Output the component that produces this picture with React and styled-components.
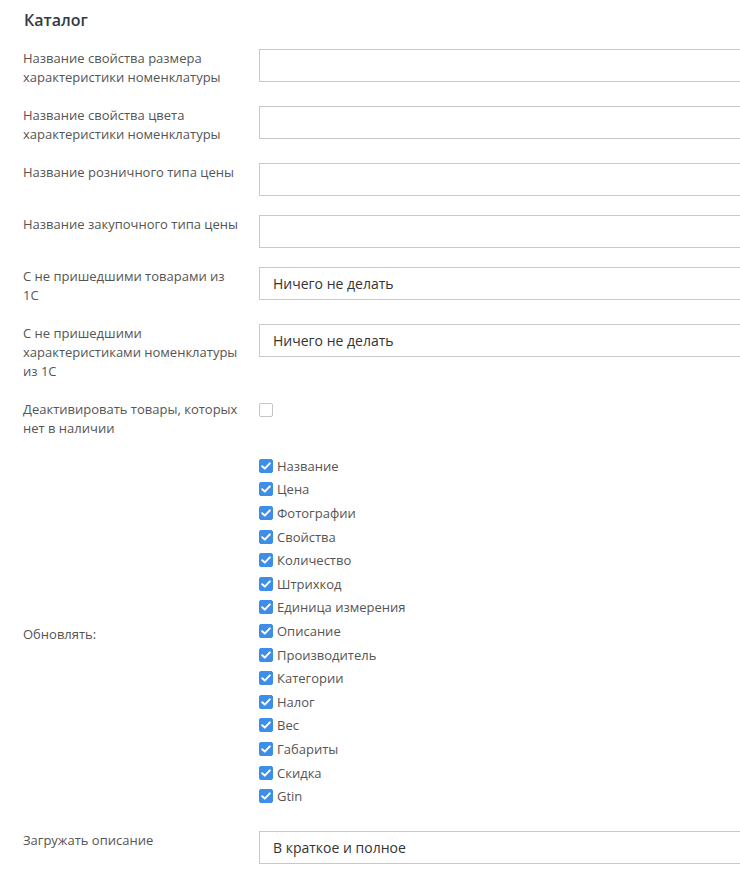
import React from "react";
import styled, { createGlobalStyle } from "styled-components";

const GlobalStyle = createGlobalStyle`
  html, body {
    margin: 0;
    padding: 0;
    background: #fff;
    overflow-x: hidden;
  }
  body {
    font-family: "Open Sans", "Liberation Sans", sans-serif;
    color: #555;
  }
`;

const updateFields = [
  "Название",
  "Цена",
  "Фотографии",
  "Свойства",
  "Количество",
  "Штрихкод",
  "Единица измерения",
  "Описание",
  "Производитель",
  "Категории",
  "Налог",
  "Вес",
  "Габариты",
  "Скидка",
  "Gtin",
];

export default function App() {
  return (
    <Page>
      <GlobalStyle />
      <Title>Каталог</Title>
      <Form>
        <Row>
          <Label>Название свойства размера характеристики номенклатуры</Label>
          <Field>
            <TextInput />
          </Field>
        </Row>
        <Row>
          <Label>Название свойства цвета характеристики номенклатуры</Label>
          <Field>
            <TextInput />
          </Field>
        </Row>
        <Row>
          <Label>Название розничного типа цены</Label>
          <Field>
            <TextInput />
          </Field>
        </Row>
        <Row>
          <Label>Название закупочного типа цены</Label>
          <Field>
            <TextInput />
          </Field>
        </Row>
        <Row>
          <Label>С не пришедшими товарами из 1С</Label>
          <Field>
            <Select>Ничего не делать</Select>
          </Field>
        </Row>
        <Row>
          <Label>С не пришедшими характеристиками номенклатуры из 1С</Label>
          <Field>
            <Select>Ничего не делать</Select>
          </Field>
        </Row>
        <Row>
          <Label>Деактивировать товары, которых нет в наличии</Label>
          <Field>
            <Box />
          </Field>
        </Row>
        <Row $center>
          <Label>Обновлять:</Label>
          <CheckList>
            {updateFields.map((name) => (
              <CheckItem key={name}>
                <Box $checked>
                  <svg width="10" height="8" viewBox="0 0 10 8">
                    <path
                      d="M1.2 4.2 L3.8 6.6 L8.8 1.4"
                      fill="none"
                      stroke="#fff"
                      strokeWidth="2"
                      strokeLinecap="round"
                      strokeLinejoin="round"
                    />
                  </svg>
                </Box>
                <span>{name}</span>
              </CheckItem>
            ))}
          </CheckList>
        </Row>
        <Row>
          <Label>Загружать описание</Label>
          <Field>
            <Select>В краткое и полное</Select>
          </Field>
        </Row>
      </Form>
    </Page>
  );
}

const Page = styled.div`
  padding: 9px 0 0 23px;
  overflow: hidden;
`;

const Title = styled.h2`
  margin: 0 0 18px 1px;
  font-size: 16px;
  font-weight: 600;
  color: #333a44;
  line-height: 22px;
`;

const Form = styled.div`
  display: flex;
  flex-direction: column;
`;

const Row = styled.div`
  display: flex;
  align-items: ${(p) => (p.$center ? "center" : "flex-start")};
  margin-bottom: 19px;
`;

const Label = styled.div`
  flex: 0 0 219px;
  margin-right: 17px;
  font-size: 13px;
  line-height: 19px;
  color: #555;
`;

const Field = styled.div`
  flex: 0 0 500px;
`;

const TextInput = styled.div`
  box-sizing: border-box;
  height: 33px;
  border: 1px solid #c8c8c8;
  background: #fff;
`;

const Select = styled(TextInput)`
  padding: 0 13px;
  font-size: 14px;
  line-height: 31px;
  color: #333;
`;

const Box = styled.span`
  box-sizing: border-box;
  display: inline-flex;
  align-items: center;
  justify-content: center;
  width: 14px;
  height: 14px;
  border-radius: 2px;
  margin-top: 2px;
  border: 1px solid ${(p) => (p.$checked ? "#3d8ee9" : "#c4c4c4")};
  background: ${(p) => (p.$checked ? "#3d8ee9" : "#fff")};
`;

const CheckList = styled.div`
  display: flex;
  flex-direction: column;
  margin: -3px 0 4px;
`;

const CheckItem = styled.label`
  display: flex;
  align-items: center;
  gap: 4px;
  height: 23.6px;
  font-size: 13px;
  color: #555;

  ${Box} {
    margin-top: 0;
  }
`;
